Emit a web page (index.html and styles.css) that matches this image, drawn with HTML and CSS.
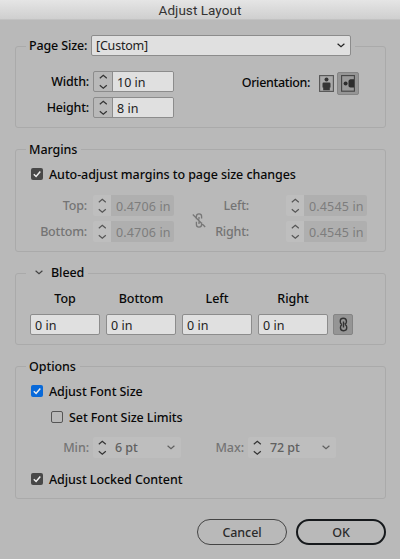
FILE: index.html
```html
<!DOCTYPE html>
<html lang="en">
<head>
<meta charset="utf-8">
<title>Adjust Layout</title>
<link rel="stylesheet" href="styles.css">
</head>
<body>
<svg class="defs" width="0" height="0">
  <symbol id="steps" viewBox="0 0 18 21"><path d="M5.8 7.2 9.3 4.2l3.5 3M5.8 14.3l3.5 3 3.5-3" fill="none" stroke="currentColor" stroke-width="1.2"/></symbol>
  <symbol id="down" viewBox="0 0 8 5"><path d="M.6.7 4 3.7 7.4.7" fill="none" stroke="currentColor" stroke-width="1.2"/></symbol>
  <symbol id="tick" viewBox="0 0 12 12"><path d="m2.8 6.2 2.3 2.3 4.2-5" fill="none" stroke="#eee" stroke-width="1.5"/></symbol>
</svg>
<main class="dialog">
  <header class="titlebar"><h1>Adjust Layout</h1></header>

  <section class="group page">
    <div class="legend"><label>Page Size:</label><div class="select"><span>[Custom]</span><svg class="down"><use href="#down"/></svg></div></div>
    <div class="size-body">
      <div class="pair">
        <label>Width:</label><div class="stepper"><svg class="steps"><use href="#steps"/></svg><span class="value">10 in</span></div>
        <label>Height:</label><div class="stepper"><svg class="steps"><use href="#steps"/></svg><span class="value">8 in</span></div>
      </div>
      <div class="orientation">
        <label>Orientation:</label>
        <svg class="portrait" viewBox="0 0 15 17"><rect x=".6" y=".6" width="13.8" height="15.8" fill="#aaa" stroke="#555" stroke-width="1.1"/><circle cx="7.5" cy="4.6" r="2" fill="#353535"/><path d="M3.5 8.7q0-1.2 1.2-1.2h5.6q1.2 0 1.2 1.2V12.5H10.8v2.8H4.2v-2.8H3.5z" fill="#353535"/></svg>
        <span class="toggle landscape"><svg width="14" height="17" viewBox="0 0 14 17"><rect x=".6" y=".6" width="12.8" height="15.6" fill="#999" stroke="#444" stroke-width="1.1"/><circle cx="4.6" cy="8.4" r="2" fill="#2d2d2d"/><path d="M13 4.2H9.4Q7.5 4.6 7.5 6v4.8q0 1.4 1.9 1.8H13z" fill="#2d2d2d"/></svg></span>
      </div>
    </div>
  </section>

  <section class="group margins">
    <div class="legend"><h2>Margins</h2></div>
    <label class="check"><span class="box dark"><svg><use href="#tick"/></svg></span><span>Auto-adjust margins to page size changes</span></label>
    <div class="margin-fields disabled">
      <div class="pair">
        <label>Top:</label><div class="stepper"><svg class="steps"><use href="#steps"/></svg><span class="value">0.4706 in</span></div>
        <label>Bottom:</label><div class="stepper"><svg class="steps"><use href="#steps"/></svg><span class="value">0.4706 in</span></div>
      </div>
      <svg class="unlink" viewBox="0 0 14 17" fill="none" stroke="#777" stroke-width="1.3"><path d="M4.4 7.2V4.4q0-2.6 2.6-2.6t2.6 2.6v2.2M4.4 9.8v2.8q0 2.6 2.6 2.6t2.6-2.6v-2M7 5v2.5M7 9.5V12M.8 2.5 13.2 15"/></svg>
      <div class="pair right">
        <label>Left:</label><div class="stepper"><svg class="steps"><use href="#steps"/></svg><span class="value">0.4545 in</span></div>
        <label>Right:</label><div class="stepper"><svg class="steps"><use href="#steps"/></svg><span class="value">0.4545 in</span></div>
      </div>
    </div>
  </section>

  <section class="group bleed">
    <div class="legend"><svg class="down"><use href="#down"/></svg><h2>Bleed</h2></div>
    <div class="bleed-grid">
      <label>Top</label><label>Bottom</label><label>Left</label><label>Right</label><span></span>
      <div class="input">0 in</div><div class="input">0 in</div><div class="input">0 in</div><div class="input">0 in</div>
      <span class="toggle link"><svg width="9" height="15" viewBox="0 0 9 15" fill="none" stroke="#333" stroke-width="1.4"><path d="M2.8 7.3Q1.3 6.7 1.3 5V3.8Q1.3 1.2 4.2 1.2T7.4 3.8V5q0 1.5-1.8 2.2M6.2 7.6q1.5.7 1.5 2.3v1.2q0 2.6-3 2.6t-3.2-2.6V9.9q0-1.6 1.6-2.3M4.5 4.5v6"/></svg></span>
    </div>
  </section>

  <section class="group options">
    <div class="legend"><h2>Options</h2></div>
    <label class="check"><span class="box blue"><svg><use href="#tick"/></svg></span><span>Adjust Font Size</span></label>
    <label class="check nested"><span class="box empty"></span><span>Set Font Size Limits</span></label>
    <div class="limits">
      <label>Min:</label><div class="combo"><svg class="steps"><use href="#steps"/></svg><span>6 pt</span><svg class="down"><use href="#down"/></svg></div>
      <label>Max:</label><div class="combo"><svg class="steps"><use href="#steps"/></svg><span>72 pt</span><svg class="down"><use href="#down"/></svg></div>
    </div>
    <label class="check locked"><span class="box dark"><svg><use href="#tick"/></svg></span><span>Adjust Locked Content</span></label>
  </section>

  <footer class="actions"><button>Cancel</button><button class="primary">OK</button></footer>
</main>
</body>
</html>
```

FILE: styles.css
```css
* { box-sizing: border-box; }
body { margin: 0; background: #b9b9b9; color: #080808; font: 500 12.5px/20px "Noto Sans", sans-serif; letter-spacing: -.07px; white-space: nowrap; }
h1, h2 { margin: 0; font: inherit; }
svg { display: block; flex: none; }
.defs { position: absolute; }
.dialog { display: flex; flex-direction: column; width: 400px; height: 559px; }
.titlebar { height: 20px; margin-bottom: 26px; background: linear-gradient(#e5e5e5, #cfcfcf); border-bottom: 1px solid #c2c2c2; color: #333; text-align: center; }
.titlebar h1 { font: 13.5px/20px Roboto, sans-serif; letter-spacing: .05px; }
.group { width: 371px; margin: 0 0 21px 15px; border: 1px solid #aaa; border-radius: 3px; }
.legend { display: flex; align-items: center; width: max-content; height: 21px; margin: -11px 0 0 10px; padding: 0 4px 0 3px; background: #b9b9b9; }
.page { height: 82px; }
.page .legend { margin-top: -12px; }
.margins { height: 103px; }
.bleed { height: 72px; }
.options { height: 133px; margin-bottom: 20px; }

.legend label { width: 62px; letter-spacing: -.15px; line-height: 22px; }
.select { display: flex; align-items: center; justify-content: space-between; width: 260px; height: 21px; padding: 0 5px 0 4px; border: 1px solid #8c8c8c; border-radius: 2px; background: #e0e0e0; color: #222; font-weight: 400; }
.select span { line-height: 22px; letter-spacing: -.2px; }
.down { width: 8px; height: 5px; }
.size-body { display: flex; justify-content: space-between; padding: 15px 26px 0 0; }
.pair { display: grid; grid-template-columns: 73px 81px; grid-auto-rows: 21px; column-gap: 4px; row-gap: 5px; text-align: right; line-height: 22px; letter-spacing: -.2px; }
.stepper { display: flex; height: 21px; border: 1px solid #8c8c8c; border-radius: 2px; overflow: hidden; text-align: left; }
.steps { width: 18px; height: 21px; margin-top: -1px; color: #333; }
.value { flex: 1; padding-left: 4px; border-left: 1px solid #8c8c8c; background: #e0e0e0; color: #222; font-weight: 400; line-height: 21px; letter-spacing: 0; }
.orientation { display: flex; align-items: center; height: 23px; letter-spacing: -.35px; }
.portrait { width: 15px; height: 17px; margin: 1px 3px 0 9px; }
.toggle { display: flex; align-items: center; justify-content: center; border: 1px solid #858585; border-radius: 2px; background: #959595; }
.landscape { width: 22px; height: 23px; margin-top: 2px; }

.check { display: flex; align-items: center; gap: 6px; height: 20px; margin: 4px 0 0 15px; }
.check span:last-child { line-height: 21px; }
.box { width: 12px; height: 12px; border-radius: 2px; }
.box svg { width: 12px; height: 12px; }
.dark { background: #484848; }
.blue { background: #0869d9; }
.empty { border: 1px solid #555; }
.margin-fields { display: flex; margin-top: 11px; }
.disabled { color: #747474; }
.disabled .pair { grid-template-columns: 71px 81px; column-gap: 6px; }
.disabled .right { grid-template-columns: 43px 81px; column-gap: 37px; }
.disabled .stepper { border: 0; background: #bebebe; }
.disabled .steps { margin: 0; color: #555; }
.disabled .value { border: 0; background: #afafaf; color: #7d7d7d; line-height: 23px; padding-left: 5px; letter-spacing: .15px; }
.unlink { width: 14px; height: 17px; margin: 17px 0 0 18px; }

.bleed .legend { margin-top: -12px; padding-left: 9px; gap: 8px; }
.bleed .legend .down { color: #444; }
.bleed-grid { display: grid; grid-template-columns: repeat(4, 70px) 20px; grid-template-rows: 20px 21px; gap: 5px 6px; padding: 6px 0 0 14px; text-align: center; }
.input { border: 1px solid #8c8c8c; border-radius: 2px; background: #e0e0e0; color: #222; text-align: left; padding-left: 4px; font-weight: 400; line-height: 21px; letter-spacing: 0; }
.link { width: 20px; height: 21px; margin-left: -1px; }

.nested { margin: 6px 0 0 35px; }
.limits { display: grid; grid-template-columns: 73px 88px 59px 88px; column-gap: 4px; margin-top: 10px; color: #747474; text-align: right; line-height: 22px; }
.combo { display: flex; align-items: center; height: 21px; padding-right: 6px; border-radius: 2px; background: #bebebe; color: #606060; }
.combo .steps { margin: 0 4px 0 0; }
.combo .down { margin-left: auto; }
.locked { margin-top: 10px; }
.actions { display: flex; justify-content: flex-end; gap: 9px; padding-right: 14px; }
.actions button { width: 90px; height: 26px; padding: 1px 0 0; border: 1px solid #444; border-radius: 13px; background: transparent; color: #2b2b2b; font: inherit; letter-spacing: inherit; }
.actions .primary { border: 2px solid #16191c; }
```
